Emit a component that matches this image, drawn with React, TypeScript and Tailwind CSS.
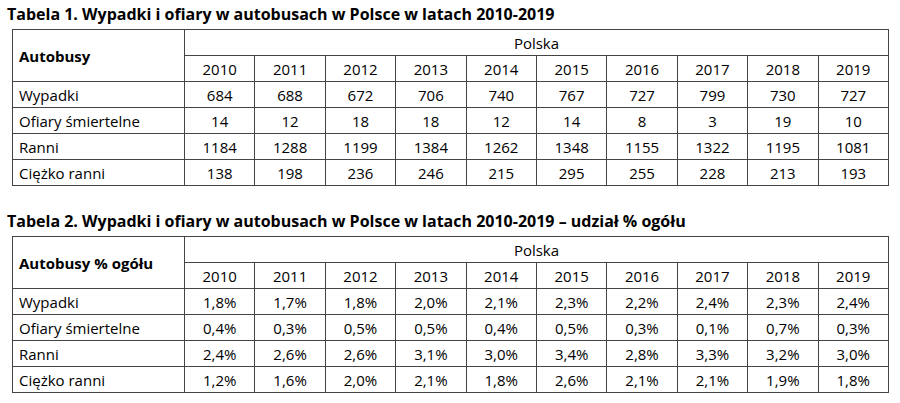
const years = ["2010", "2011", "2012", "2013", "2014", "2015", "2016", "2017", "2018", "2019"];

type Row = { label: string; values: string[] };

const table1: Row[] = [
  { label: "Wypadki", values: ["684", "688", "672", "706", "740", "767", "727", "799", "730", "727"] },
  { label: "Ofiary śmiertelne", values: ["14", "12", "18", "18", "12", "14", "8", "3", "19", "10"] },
  { label: "Ranni", values: ["1184", "1288", "1199", "1384", "1262", "1348", "1155", "1322", "1195", "1081"] },
  { label: "Ciężko ranni", values: ["138", "198", "236", "246", "215", "295", "255", "228", "213", "193"] },
];

const table2: Row[] = [
  { label: "Wypadki", values: ["1,8%", "1,7%", "1,8%", "2,0%", "2,1%", "2,3%", "2,2%", "2,4%", "2,3%", "2,4%"] },
  { label: "Ofiary śmiertelne", values: ["0,4%", "0,3%", "0,5%", "0,5%", "0,4%", "0,5%", "0,3%", "0,1%", "0,7%", "0,3%"] },
  { label: "Ranni", values: ["2,4%", "2,6%", "2,6%", "3,1%", "3,0%", "3,4%", "2,8%", "3,3%", "3,2%", "3,0%"] },
  { label: "Ciężko ranni", values: ["1,2%", "1,6%", "2,0%", "2,1%", "1,8%", "2,6%", "2,1%", "2,1%", "1,9%", "1,8%"] },
];

function DataTable({ corner, rows }: { corner: string; rows: Row[] }) {
  return (
    <table className="ml-[12px] w-[877px] table-fixed border-collapse text-[15px] leading-[20px] text-black">
      <colgroup>
        <col className="w-[172px]" />
        {years.map((y) => (
          <col key={y} />
        ))}
      </colgroup>
      <thead>
        <tr className="h-[26px]">
          <th
            rowSpan={2}
            className="border border-[#444] px-[6px] pt-[1px] text-left align-middle font-bold"
          >
            {corner}
          </th>
          <th colSpan={10} className="border border-[#444] p-0 text-center font-normal">
            Polska
          </th>
        </tr>
        <tr className="h-[26px]">
          {years.map((y) => (
            <th key={y} className="border border-[#444] p-0 pt-[1px] text-center font-normal">
              {y}
            </th>
          ))}
        </tr>
      </thead>
      <tbody>
        {rows.map((r) => (
          <tr key={r.label} className="h-[26px]">
            <td className="border border-[#444] px-[6px] pt-[1px] pb-0">{r.label}</td>
            {r.values.map((v, i) => (
              <td key={i} className="border border-[#444] p-0 pt-[1px] text-center">
                {v}
              </td>
            ))}
          </tr>
        ))}
      </tbody>
    </table>
  );
}

export default function App() {
  return (
    <div className="h-[403px] w-[900px] bg-white font-['Open_Sans','Liberation_Sans',sans-serif] text-black">
      <h2 className="h-[29px] pl-[7px] text-[16px] font-bold leading-[29px]">
        Tabela 1. Wypadki i ofiary w autobusach w Polsce w latach 2010-2019
      </h2>
      <DataTable corner="Autobusy" rows={table1} />
      <h2 className="mt-[21px] h-[29px] pl-[7px] text-[16px] font-bold leading-[29px]">
        Tabela 2. Wypadki i ofiary w autobusach w Polsce w latach 2010-2019 – udział % ogółu
      </h2>
      <DataTable corner="Autobusy % ogółu" rows={table2} />
    </div>
  );
}
